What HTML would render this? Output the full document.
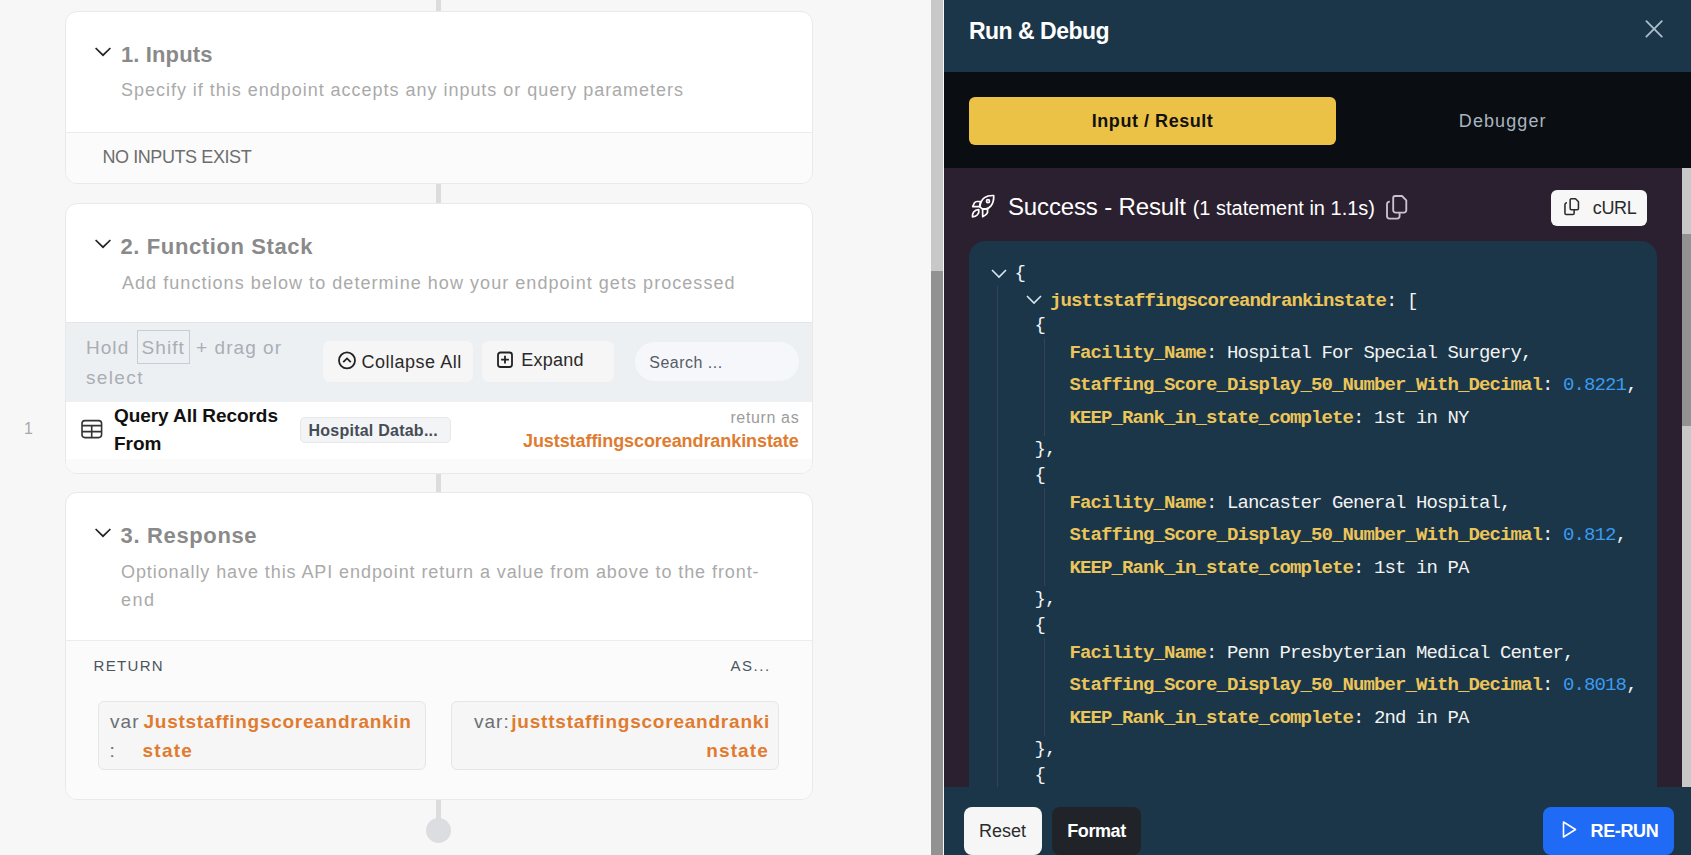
<!DOCTYPE html>
<html><head><meta charset="utf-8">
<style>
html,body{margin:0;padding:0;}
body{width:1691px;height:855px;overflow:hidden;position:relative;background:#f7f7f7;font-family:"Liberation Sans",sans-serif;}
.a{position:absolute;white-space:nowrap;}
.card{position:absolute;left:65px;width:748px;background:#fff;border:1px solid #e9e9e9;border-radius:12px;overflow:hidden;box-sizing:border-box;}
.conn{position:absolute;left:436px;width:5px;background:#dcdcdc;}
.h{font-weight:bold;color:#8a8a8a;font-size:22px;}
.sub{color:#aaaaaa;font-size:18px;}
.mono{font-family:"Liberation Mono",monospace;font-size:19px;letter-spacing:-0.9px;}
.k{color:#ecc55a;font-weight:bold;}
.w{color:#f2f2f2;}
.n{color:#3a9bf0;}
</style></head><body>
<!-- LEFT PANEL -->
<div class="conn" style="top:0;height:14px"></div>
<div class="conn" style="top:182px;height:24px"></div>
<div class="conn" style="top:471px;height:24px"></div>
<div class="conn" style="top:797px;height:30px"></div>
<div class="a" style="left:426px;top:818px;width:25px;height:25px;border-radius:50%;background:#dcdde0"></div>

<!-- card 1 -->
<div class="card" style="top:11px;height:173px">
  <div class="a" style="left:0;top:120px;width:748px;height:53px;background:#fbfbfb;border-top:1px solid #ececec"></div>
</div>
<svg class="a" style="left:93px;top:44px" width="20" height="14" viewBox="0 0 20 14"><path d="M2.6 4 L10 11.2 L17.4 4" fill="none" stroke="#222" stroke-width="1.7"/></svg>
<div class="a h" id="t1" style="left:121px;top:41.8px;letter-spacing:0.12px">1. Inputs</div>
<div class="a sub" id="t2" style="left:121px;top:80px;letter-spacing:0.98px">Specify if this endpoint accepts any inputs or query parameters</div>
<div class="a" id="t3" style="left:102.4px;top:147.4px;font-size:18px;color:#6d6d6d;letter-spacing:-0.41px">NO INPUTS EXIST</div>

<!-- card 2 -->
<div class="card" style="top:203px;height:271px">
  <div class="a" style="left:0;top:118px;width:748px;height:80px;background:#edf0f3;border-top:1px solid #e4e6e9;box-sizing:border-box"></div>
  <div class="a" style="left:0;top:198px;width:748px;height:57px;background:#fff;border-bottom:1px solid #e0e0e0"></div>
  <div class="a" style="left:0;top:255px;width:748px;height:16px;background:#fafafa"></div>
</div>
<svg class="a" style="left:93px;top:236px" width="20" height="14" viewBox="0 0 20 14"><path d="M2.6 4 L10 11.2 L17.4 4" fill="none" stroke="#222" stroke-width="1.7"/></svg>
<div class="a h" id="t4" style="left:120.5px;top:234.2px;letter-spacing:0.61px">2. Function Stack</div>
<div class="a sub" id="t5" style="left:122px;top:272.8px;letter-spacing:1.05px">Add functions below to determine how your endpoint gets processed</div>

<div class="a" id="t6" style="left:86px;top:329.8px;font-size:19px;color:#a9aeb4;line-height:30px;letter-spacing:1.04px">Hold <span style="display:inline-block;border:1px solid #c8cdd3;padding:2px 4px 0;line-height:30px;margin-left:1px">Shift</span> + drag or</div>
<div class="a" id="t6b" style="left:86px;top:362.7px;font-size:19px;color:#a9aeb4;line-height:30px;letter-spacing:1.36px">select</div>

<div class="a" style="left:323px;top:341px;width:150px;height:41px;background:#f6f6f6;border-radius:7px"></div>
<svg class="a" style="left:337px;top:350px" width="20" height="20" viewBox="0 0 20 20"><circle cx="10" cy="10.4" r="8" fill="none" stroke="#222" stroke-width="1.8"/><path d="M6.2 12.2 L10 8.4 L13.8 12.2" fill="none" stroke="#222" stroke-width="1.8"/></svg>
<div class="a" id="t7" style="left:361.6px;top:351.8px;font-size:18px;color:#2a2a2a;letter-spacing:0.50px">Collapse All</div>

<div class="a" style="left:482px;top:341px;width:132px;height:41px;background:#f6f6f6;border-radius:7px"></div>
<svg class="a" style="left:495px;top:350px" width="20" height="20" viewBox="0 0 20 20"><rect x="3" y="2.5" width="14" height="14.5" rx="2.5" fill="none" stroke="#222" stroke-width="1.8"/><path d="M10 5.8 V13.6 M6.1 9.7 H13.9" fill="none" stroke="#222" stroke-width="1.8"/></svg>
<div class="a" id="t8" style="left:521.2px;top:349.5px;font-size:18px;color:#2a2a2a;letter-spacing:0.26px">Expand</div>

<div class="a" style="left:635px;top:342px;width:164px;height:39px;background:#f5f7fa;border-radius:20px"></div>
<div class="a" id="t9" style="left:649.3px;top:354px;font-size:16px;color:#555d67;letter-spacing:0.49px">Search ...</div>

<div class="a" id="t10" style="left:24px;top:419.5px;font-size:16px;color:#a9a9a9">1</div>
<svg class="a" style="left:79px;top:418px" width="24" height="22" viewBox="0 0 24 22"><rect x="3" y="2.6" width="19.6" height="17" rx="3" fill="none" stroke="#333" stroke-width="1.6"/><path d="M3 7.6 H22.6 M3 13.6 H22.6 M12.7 7.6 V19.6" fill="none" stroke="#333" stroke-width="1.6"/></svg>
<div class="a" id="t11" style="left:114px;top:401.8px;font-size:19px;font-weight:bold;color:#111;line-height:28px;letter-spacing:-0.07px">Query All Records</div>
<div class="a" id="t11b" style="left:114px;top:429.8px;font-size:19px;font-weight:bold;color:#111;line-height:28px">From</div>
<div class="a" style="left:300px;top:417px;width:151px;height:26px;background:#f3f4f6;border:1px solid #e6e7ea;border-radius:5px;box-sizing:border-box"></div>
<div class="a" id="t12" style="left:308.5px;top:422.2px;font-size:16px;font-weight:bold;color:#454c55;letter-spacing:0.24px">Hospital Datab...</div>
<div class="a" id="t13" style="left:730.4px;top:408.5px;font-size:16px;color:#9c9c9c;letter-spacing:0.64px">return as</div>
<div class="a" id="t14" style="left:523px;top:431px;font-size:18px;font-weight:bold;color:#e07b30;letter-spacing:-0.08px">Juststaffingscoreandrankinstate</div>

<!-- card 3 -->
<div class="card" style="top:492px;height:308px">
  <div class="a" style="left:0;top:147px;width:748px;height:161px;background:#fbfbfb;border-top:1px solid #ececec"></div>
</div>
<svg class="a" style="left:93px;top:525px" width="20" height="14" viewBox="0 0 20 14"><path d="M2.6 4 L10 11.2 L17.4 4" fill="none" stroke="#222" stroke-width="1.7"/></svg>
<div class="a h" id="t15" style="left:120.6px;top:523px;letter-spacing:0.64px">3. Response</div>
<div class="a sub" id="t16" style="left:121px;top:557.5px;line-height:28px;letter-spacing:0.92px">Optionally have this API endpoint return a value from above to the front-</div>
<div class="a sub" id="t16b" style="left:121px;top:585.5px;line-height:28px;letter-spacing:1.5px">end</div>
<div class="a" id="t17" style="left:93.6px;top:656.5px;font-size:15px;color:#4b5560;letter-spacing:1.3px">RETURN</div>
<div class="a" id="t18" style="left:730.6px;top:656.5px;font-size:15px;color:#4b5560;letter-spacing:1.5px">AS...</div>

<div class="a" style="left:98px;top:701px;width:328px;height:69px;background:#f6f6f6;border:1px solid #e6e6e6;border-radius:6px;box-sizing:border-box"></div>
<div class="a" id="t19" style="left:110px;top:710.6px;font-size:19px;color:#6a6f75;letter-spacing:1.10px">var</div>
<div class="a" id="t19c" style="left:109.6px;top:739.8px;font-size:19px;color:#6a6f75">:</div>
<div class="a" id="t20" style="left:143.5px;top:710.6px;font-size:19px;font-weight:bold;color:#e07b30;letter-spacing:0.73px">Juststaffingscoreandrankin</div>
<div class="a" id="t20b" style="left:142.5px;top:740px;font-size:19px;font-weight:bold;color:#e07b30;letter-spacing:1.25px">state</div>

<div class="a" style="left:451px;top:701px;width:328px;height:69px;background:#f6f6f6;border:1px solid #e6e6e6;border-radius:6px;box-sizing:border-box"></div>
<div class="a" id="t21" style="left:474px;top:710.6px;font-size:19px;color:#6a6f75;letter-spacing:1.00px">var:</div>
<div class="a" id="t22" style="left:511.3px;top:710.6px;font-size:19px;font-weight:bold;color:#e07b30;letter-spacing:0.78px">justtstaffingscoreandranki</div>
<div class="a" id="t22b" style="left:706.2px;top:740px;font-size:19px;font-weight:bold;color:#e07b30;letter-spacing:1.14px">nstate</div>

<!-- left scrollbar -->
<div class="a" style="left:931px;top:0;width:12px;height:855px;background:#c8c8c8"></div>
<div class="a" style="left:931px;top:271px;width:12px;height:584px;background:#929292"></div>

<!-- RIGHT PANEL -->
<div class="a" style="left:944px;top:0;width:748px;height:72px;background:#1b3648"></div>
<div class="a" id="r1" style="left:968.9px;top:17.9px;font-size:23px;font-weight:bold;color:#fff;letter-spacing:-0.49px">Run &amp; Debug</div>
<svg class="a" style="left:1642px;top:17px" width="24" height="24" viewBox="0 0 24 24"><path d="M4.4 4.2 L19.8 19.6 M19.8 4.2 L4.4 19.6" stroke="#a9bccb" stroke-width="1.9" stroke-linecap="round"/></svg>

<div class="a" style="left:944px;top:72px;width:748px;height:96px;background:#0a0d11"></div>
<div class="a" style="left:969px;top:97px;width:367px;height:48px;background:#ebc246;border-radius:6px"></div>
<div class="a" id="r2" style="left:1091.8px;top:111px;font-size:18px;font-weight:bold;color:#111;letter-spacing:0.54px">Input / Result</div>
<div class="a" id="r3" style="left:1458.8px;top:111px;font-size:18px;color:#a9b4be;letter-spacing:1.10px">Debugger</div>

<div class="a" style="left:944px;top:168px;width:738px;height:619px;background:#2b202f"></div>
<div class="a" style="left:1682px;top:168px;width:9px;height:619px;background:#c8c8c8"></div>
<div class="a" style="left:1682px;top:234px;width:9px;height:192px;background:#929292"></div>

<svg class="a" style="left:968px;top:191px" width="30" height="30" viewBox="0 0 30 30" fill="none" stroke="#fff" stroke-width="1.7" stroke-linejoin="round" stroke-linecap="round">
<path d="M11.9 15.8 C12.3 12 14 8.5 16.5 6.6 C19 4.8 22.5 4.4 25.7 4.5 C25.9 8 25.4 11.5 23.2 14.6 C21.6 16.6 19.8 17.6 18.3 17.9 L14.3 17.8 Z"/>
<circle cx="20" cy="10.2" r="1.5"/>
<path d="M4.7 15.6 L6.3 12 Q7.4 10.5 9 10.5 L12.5 10.5 L11.5 15.6 Z"/>
<path d="M14.6 18.4 L19.6 17.6 L19.5 21.6 Q18.6 24 14.7 25.6 Z"/>
<path d="M4.5 25.8 C4 22.5 6 18.8 10.8 18.6 C11.6 23 8.5 25.6 4.5 25.8 Z"/>
</svg>
<div class="a" id="r4" style="left:1008px;top:193px;font-size:24px;color:#fff;letter-spacing:-0.15px">Success - Result</div>
<div class="a" id="r5" style="left:1192.7px;top:197px;font-size:20px;color:#fff">(1 statement in 1.1s)</div>
<svg class="a" style="left:1382px;top:192px" width="30" height="30" viewBox="0 0 30 30" fill="none" stroke="#cbc1d0" stroke-width="1.85" stroke-linejoin="round">
<path d="M13.2 4 H20 L24.3 8.3 V18.3 A2.3 2.3 0 0 1 22 20.6 H13.5 A2.3 2.3 0 0 1 11.2 18.3 V6 A2 2 0 0 1 13.2 4 Z"/>
<path d="M7.8 9.6 A2.6 2.6 0 0 0 5 12.2 V24.1 A2.5 2.5 0 0 0 7.5 26.6 H15.1 A2.5 2.5 0 0 0 17.6 24.1 V20.6"/>
</svg>

<div class="a" style="left:1551px;top:190px;width:96px;height:36px;background:#f7f7f7;border-radius:6px"></div>
<svg class="a" style="left:1561px;top:196px" width="22" height="22" viewBox="0 0 22 22" fill="none" stroke="#2a2a2a" stroke-width="1.55" stroke-linejoin="round">
<path d="M10.5 2.75 H14.5 L17.45 5.7 V12.4 A1.25 1.25 0 0 1 16.2 13.65 H10.4 A1.25 1.25 0 0 1 9.15 12.4 V4 A1.25 1.25 0 0 1 10.5 2.75 Z"/>
<path d="M6 6.7 A2 2 0 0 0 3.95 8.7 V17.2 A1.3 1.3 0 0 0 5.25 18.5 H11.85 A1.3 1.3 0 0 0 13.15 17.2 V13.65"/>
</svg>
<div class="a" id="r6" style="left:1592.8px;top:197.6px;font-size:18px;color:#2a2a2a;letter-spacing:-0.37px">cURL</div>

<!-- code block -->
<div class="a" style="left:969px;top:241px;width:688px;height:600px;background:#1b3648;border-radius:16px"></div>
<div class="a" style="left:997px;top:286px;width:1px;height:501px;background:#37444f"></div>
<div class="a" style="left:1044px;top:338px;width:1px;height:98px;background:#37444f"></div>
<div class="a" style="left:1044px;top:488px;width:1px;height:98px;background:#37444f"></div>
<div class="a" style="left:1044px;top:638px;width:1px;height:98px;background:#37444f"></div>
<svg class="a" style="left:990px;top:267px" width="18" height="12" viewBox="0 0 18 12"><path d="M2 3 L9 10 L16 3" fill="none" stroke="#d6e6f2" stroke-width="1.6"/></svg>
<svg class="a" style="left:1025px;top:293px" width="18" height="12" viewBox="0 0 18 12"><path d="M2 3 L9 10 L16 3" fill="none" stroke="#d6e6f2" stroke-width="1.6"/></svg>
<div id="code">
<div class="a mono" style="left:1014.5px;top:263.35px;line-height:20px"><span class="w">{</span></div>
<div class="a mono" style="left:1050px;top:290.85px;line-height:20px"><span class="k">justtstaffingscoreandrankinstate</span><span class="w">: [</span></div>
<div class="a mono" style="left:1034.5px;top:315.35px;line-height:20px"><span class="w">{</span></div>
<div class="a mono" style="left:1069.5px;top:343.35px;line-height:20px"><span class="k">Facility_Name</span><span class="w">: Hospital For Special Surgery,</span></div>
<div class="a mono" style="left:1069.5px;top:375.35px;line-height:20px"><span class="k">Staffing_Score_Display_50_Number_With_Decimal</span><span class="w">: </span><span class="n">0.8221</span><span class="w">,</span></div>
<div class="a mono" style="left:1069.5px;top:408.35px;line-height:20px"><span class="k">KEEP_Rank_in_state_complete</span><span class="w">: 1st in NY</span></div>
<div class="a mono" style="left:1034.5px;top:439.35px;line-height:20px"><span class="w">},</span></div>
<div class="a mono" style="left:1034.5px;top:465.35px;line-height:20px"><span class="w">{</span></div>
<div class="a mono" style="left:1069.5px;top:493.35px;line-height:20px"><span class="k">Facility_Name</span><span class="w">: Lancaster General Hospital,</span></div>
<div class="a mono" style="left:1069.5px;top:525.35px;line-height:20px"><span class="k">Staffing_Score_Display_50_Number_With_Decimal</span><span class="w">: </span><span class="n">0.812</span><span class="w">,</span></div>
<div class="a mono" style="left:1069.5px;top:558.35px;line-height:20px"><span class="k">KEEP_Rank_in_state_complete</span><span class="w">: 1st in PA</span></div>
<div class="a mono" style="left:1034.5px;top:589.35px;line-height:20px"><span class="w">},</span></div>
<div class="a mono" style="left:1034.5px;top:615.35px;line-height:20px"><span class="w">{</span></div>
<div class="a mono" style="left:1069.5px;top:643.35px;line-height:20px"><span class="k">Facility_Name</span><span class="w">: Penn Presbyterian Medical Center,</span></div>
<div class="a mono" style="left:1069.5px;top:675.35px;line-height:20px"><span class="k">Staffing_Score_Display_50_Number_With_Decimal</span><span class="w">: </span><span class="n">0.8018</span><span class="w">,</span></div>
<div class="a mono" style="left:1069.5px;top:708.35px;line-height:20px"><span class="k">KEEP_Rank_in_state_complete</span><span class="w">: 2nd in PA</span></div>
<div class="a mono" style="left:1034.5px;top:739.35px;line-height:20px"><span class="w">},</span></div>
<div class="a mono" style="left:1034.5px;top:765.35px;line-height:20px"><span class="w">{</span></div>
</div>

<!-- footer -->
<div class="a" style="left:944px;top:787px;width:748px;height:68px;background:#1b3648"></div>
<div class="a" style="left:964px;top:807px;width:78px;height:48px;background:#f6f6f6;border-radius:8px"></div>
<div class="a" id="f1" style="left:978.9px;top:820.7px;font-size:18px;color:#2b2b2b">Reset</div>
<div class="a" style="left:1052px;top:807px;width:89px;height:48px;background:#202428;border-radius:8px"></div>
<div class="a" id="f2" style="left:1067.2px;top:820.7px;font-size:18px;font-weight:bold;color:#fff;letter-spacing:-0.40px">Format</div>
<div class="a" style="left:1543px;top:807px;width:131px;height:48px;background:#1f6bf5;border-radius:8px"></div>
<svg class="a" style="left:1558px;top:817px" width="24" height="24" viewBox="0 0 24 24"><path d="M5.5 5 L17.5 12.5 L5.5 20 Z" fill="none" stroke="#fff" stroke-width="1.6" stroke-linejoin="round"/></svg>
<div class="a" id="f3" style="left:1590.5px;top:820.8px;font-size:18px;font-weight:bold;color:#fff;letter-spacing:-0.36px">RE-RUN</div>
</body></html>
